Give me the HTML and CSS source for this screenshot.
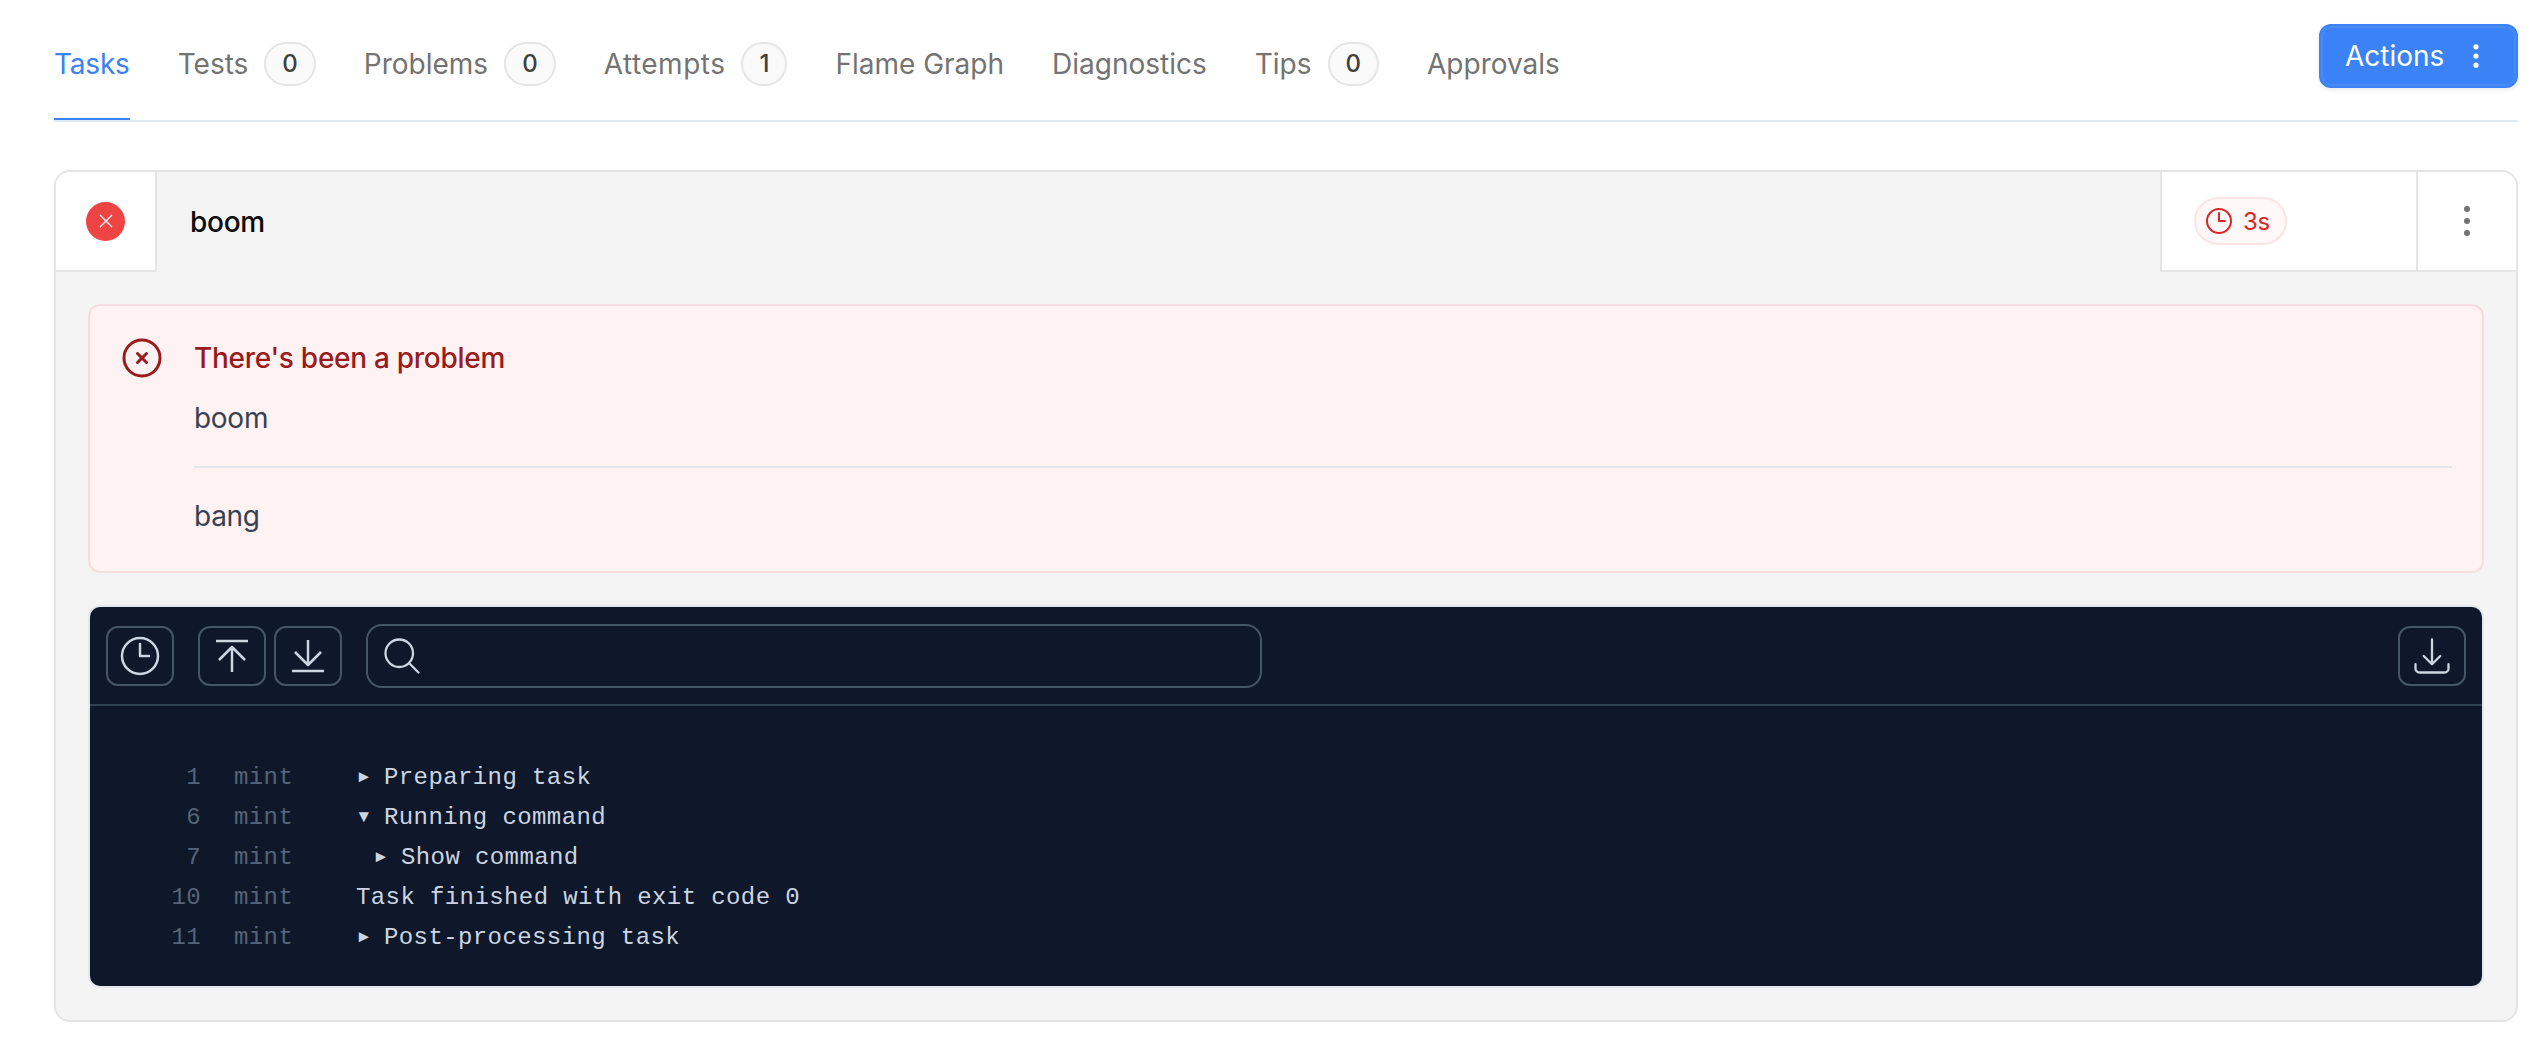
FILE: index.html
```html
<!DOCTYPE html>
<html lang="en">
<head>
<meta charset="utf-8">
<title>Tasks</title>
<link rel="stylesheet" href="styles.css">
</head>
<body>
<nav class="tabs">
  <a class="tab active">Tasks</a>
  <a class="tab">Tests <span class="count">0</span></a>
  <a class="tab">Problems <span class="count">0</span></a>
  <a class="tab tab-wide">Attempts <span class="count">1</span></a>
  <a class="tab">Flame Graph</a>
  <a class="tab">Diagnostics</a>
  <a class="tab">Tips <span class="count">0</span></a>
  <a class="tab">Approvals</a>
  <button class="actions">Actions
    <svg class="actions-dots" viewBox="0 0 8 24" width="8" height="24"><circle cx="4" cy="2.8" r="2.6"/><circle cx="4" cy="12" r="2.6"/><circle cx="4" cy="21.2" r="2.6"/></svg>
  </button>
</nav>

<section class="card">
  <header class="card-head">
    <div class="status-cell">
      <span class="status-dot"><svg viewBox="0 0 14 14" width="14" height="14"><path d="M1 1l12 12M13 1L1 13"/></svg></span>
    </div>
    <div class="task-name">boom</div>
    <div class="timer-cell">
      <span class="timer">
        <svg viewBox="0 0 24 24" width="32" height="32"><path d="M12 6v6h4.500m4.500 0a9 9 0 1 1-18 0 9 9 0 0 1 18 0Z"/></svg>
        3s
      </span>
    </div>
    <div class="menu-cell">
      <svg viewBox="0 0 6 30" width="6" height="30"><circle cx="3" cy="3" r="3"/><circle cx="3" cy="15" r="3"/><circle cx="3" cy="27" r="3"/></svg>
    </div>
  </header>

  <div class="card-body">
    <div class="alert">
      <svg class="alert-icon" viewBox="0 0 24 24" width="48" height="48"><path d="m9.750 9.750 4.500 4.500m0-4.500-4.500 4.500M21 12a9 9 0 1 1-18 0 9 9 0 0 1 18 0Z"/></svg>
      <div class="alert-main">
        <div class="alert-title">There's been a problem</div>
        <div class="alert-text first">boom</div>
        <hr class="alert-rule">
        <div class="alert-text">bang</div>
      </div>
    </div>

    <div class="log">
      <div class="log-bar">
        <button class="log-btn"><svg viewBox="0 0 24 24" width="48" height="48"><path d="M12 6v6h4.500m4.500 0a9 9 0 1 1-18 0 9 9 0 0 1 18 0Z"/></svg></button>
        <div class="log-btn-pair">
          <button class="log-btn"><svg viewBox="0 0 48 48" width="48" height="48"><path d="M8 9h32M24 40V15M11 28 24 15l13 13"/></svg></button>
          <button class="log-btn"><svg viewBox="0 0 48 48" width="48" height="48"><path d="M8 39h32M24 8v25M11 20 24 33l13-13"/></svg></button>
        </div>
        <div class="log-search">
          <svg viewBox="0 0 24 24" width="44" height="44"><path d="m21 21-5.197-5.197m0 0A7.500 7.500 0 1 0 5.196 5.196a7.500 7.500 0 0 0 10.607 10.607Z"/></svg>
        </div>
        <button class="log-btn log-download"><svg viewBox="0 0 24 24" width="44" height="44"><path d="M3 16.500v2.250A2.250 2.250 0 0 0 5.250 21h13.500A2.250 2.250 0 0 0 21 18.750V16.500M16.500 12 12 16.500m0 0L7.500 12m4.500 4.500V3"/></svg></button>
      </div>
      <div class="log-lines">
        <div class="line"><span class="ln">1</span><span class="src">mint</span><span class="msg"><span class="tri">▸</span>Preparing task</span></div>
        <div class="line"><span class="ln">6</span><span class="src">mint</span><span class="msg"><span class="tri">▾</span>Running command</span></div>
        <div class="line"><span class="ln">7</span><span class="src">mint</span><span class="msg nested"><span class="tri">▸</span>Show command</span></div>
        <div class="line"><span class="ln">10</span><span class="src">mint</span><span class="msg">Task finished with exit code 0</span></div>
        <div class="line"><span class="ln">11</span><span class="src">mint</span><span class="msg"><span class="tri">▸</span>Post-processing task</span></div>
      </div>
    </div>
  </div>
</section>
</body>
</html>
```

FILE: styles.css
```css
* { box-sizing: border-box; }

html, body { background: #fff; }

body {
  margin: 0;
  padding: 0 28px 0 54px;
  font-family: Inter, "Liberation Sans", sans-serif;
  font-size: 28px;
  letter-spacing: -.28px;
  color: #171717;
}

svg { display: block; flex: none; }

/* Tabs */
.tabs {
  display: flex;
  align-items: stretch;
  gap: 48px;
  height: 122px;
  border-bottom: 2px solid #e2e8f0;
}

.tab {
  display: flex;
  align-items: center;
  gap: 16px;
  height: 120px;
  padding-top: 10px;
  border-bottom: 2px solid transparent;
  color: #737373;
  line-height: 40px;
  letter-spacing: 0;
}

.tab.active {
  color: #3b82f6;
  border-bottom-color: #3b82f6;
  letter-spacing: -.2px;
}

.tab-wide { letter-spacing: .5px; }

.count {
  display: flex;
  align-items: center;
  justify-content: center;
  height: 44px;
  padding: 0 16px;
  border: 2px solid #e5e5e5;
  border-radius: 22px;
  background: #fafafa;
  color: #404040;
  font-size: 24px;
  font-weight: 500;
  letter-spacing: 0;
}

.actions {
  display: flex;
  align-items: center;
  gap: 28px;
  align-self: flex-start;
  margin: 24px 0 0 auto;
  width: 199px;
  height: 64px;
  padding: 0 0 0 24px;
  border: 2px solid #3b82f6;
  border-radius: 12px;
  background: #3b82f6;
  box-shadow: inset 0 0 0 2px #4a8cf7, 0 2px 4px rgba(0, 0, 0, .08);
  color: #fff;
  font: 400 28px Inter, "Liberation Sans", sans-serif;
  letter-spacing: 0;
}

.actions-dots { fill: #fff; }

/* Card */
.card {
  margin-top: 48px;
  border: 2px solid #e5e5e5;
  border-radius: 16px;
  background: #f4f4f4;
  overflow: hidden;
}

.card-head {
  display: flex;
  height: 100px;
}

.status-cell,
.timer-cell,
.menu-cell {
  display: flex;
  align-items: center;
  background: #fff;
  border-bottom: 2px solid #e5e5e5;
}

.status-cell {
  justify-content: center;
  width: 101px;
  border-right: 2px solid #e5e5e5;
}

.status-dot {
  display: flex;
  align-items: center;
  justify-content: center;
  width: 39px;
  height: 39px;
  border-radius: 50%;
  background: #ef4444;
}

.status-dot path {
  fill: none;
  stroke: #fff;
  stroke-width: 1.3;
}

.task-name {
  flex: 1;
  align-self: center;
  padding-left: 33px;
  font-weight: 500;
  color: #0a0a0a;
}

.timer-cell {
  flex: none;
  width: 258px;
  padding-left: 32px;
  border-left: 2px solid #e5e5e5;
  border-right: 2px solid #e5e5e5;
}

.timer {
  display: flex;
  align-items: center;
  gap: 8px;
  height: 48px;
  padding: 0 15px 0 7px;
  border: 2px solid #fde4e4;
  border-radius: 24px;
  background: #fef8f8;
  color: #dc2626;
  font-size: 24px;
  font-weight: 400;
}

.timer path {
  fill: none;
  stroke: #dc2626;
  stroke-width: 1.5;
  stroke-linecap: round;
  stroke-linejoin: round;
}

.menu-cell {
  justify-content: center;
  flex: none;
  width: 98px;
  fill: #737373;
}

/* Body */
.card-body { padding: 32px; }

.alert {
  display: flex;
  gap: 28px;
  padding: 28px 30px 35px 28px;
  border: 2px solid #f7dede;
  border-radius: 12px;
  background: #fef2f2;
}

.alert-icon path {
  fill: none;
  stroke: #991b1b;
  stroke-width: 1.5;
  stroke-linecap: round;
  stroke-linejoin: round;
}

.alert-main { flex: 1; }

.alert-title {
  line-height: 48px;
  font-weight: 500;
  color: #991b1b;
}

.alert-text {
  line-height: 40px;
  color: #374151;
}

.alert-text.first { margin-top: 16px; }

.alert-rule {
  height: 2px;
  margin: 28px 0;
  border: 0;
  background: #e5e7eb;
}

/* Log */
.log {
  margin-top: 32px;
  border: 2px solid #e2e8f0;
  border-radius: 12px;
  background: #0f172a;
  overflow: hidden;
}

.log-bar {
  display: flex;
  align-items: center;
  gap: 24px;
  height: 99px;
  padding: 0 16px;
  border-bottom: 2px solid #334155;
}

.log-btn-pair {
  display: flex;
  gap: 8px;
}

.log-btn {
  display: flex;
  align-items: center;
  justify-content: center;
  width: 68px;
  height: 60px;
  padding: 0;
  border: 2px solid #475569;
  border-radius: 12px;
  background: transparent;
}

.log-btn path,
.log-search path {
  fill: none;
  stroke: #cbd5e1;
  stroke-linecap: round;
  stroke-linejoin: round;
}

.log-btn svg[viewBox="0 0 24 24"] path,
.log-search path { stroke-width: 1.25; }

.log-btn svg[viewBox="0 0 48 48"] path {
  stroke-width: 2.5;
  stroke-linecap: butt;
}

.log-search {
  display: flex;
  align-items: center;
  width: 896px;
  height: 64px;
  padding-left: 12px;
  border: 2px solid #475569;
  border-radius: 16px;
}

.log-download { margin-left: auto; }

.log-lines {
  padding: 52px 0 28px;
  font-family: "Liberation Mono", "DejaVu Sans Mono", monospace;
  font-size: 24px;
  letter-spacing: .4px;
  line-height: 40px;
}

.line { display: flex; height: 40px; white-space: pre; }

.ln {
  width: 111px;
  text-align: right;
  color: #566378;
}

.src {
  width: 122px;
  margin-left: 33px;
  color: #566378;
}

.msg { color: #cbd5e1; }

.msg.nested { padding-left: 17px; }

.tri {
  display: inline-block;
  width: 28px;
  font-family: "DejaVu Sans Mono", monospace;
  font-size: 26px;
  line-height: 1;
  letter-spacing: 0;
}
```
